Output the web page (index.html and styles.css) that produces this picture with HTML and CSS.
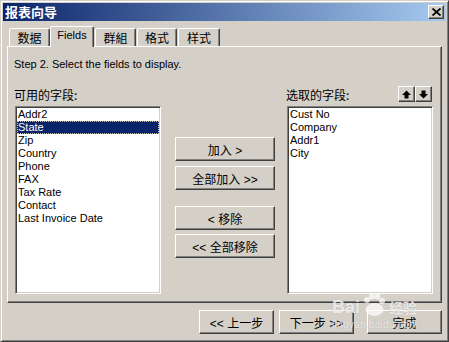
FILE: index.html
```html
<!DOCTYPE html>
<html lang="zh-CN">
<head>
  <meta charset="UTF-8" />
  <title>报表向导</title>
  <link rel="stylesheet" href="styles.css">
</head>
<body>
  <div class="window">
    <div class="titlebar">
      <span class="title">报表向导</span>
      <button class="close-btn" title="关闭">
        <svg width="9" height="8" viewBox="0 0 9 8"><path d="M0.5 0.5 L8.5 7.5 M8.5 0.5 L0.5 7.5" stroke="#000" stroke-width="1.7" fill="none"/></svg>
      </button>
    </div>

    <div class="tabs">
      <div class="tab tab-data">数据</div>
      <div class="tab tab-fields active">Fields</div>
      <div class="tab tab-group">群組</div>
      <div class="tab tab-format">格式</div>
      <div class="tab tab-style">样式</div>
    </div>

    <div class="panel">
      <div class="step">Step 2. Select the fields to display.</div>

      <div class="columns">
        <div class="field-col">
          <div class="col-head"><span class="col-label">可用的字段:</span></div>
          <ul class="listbox">
            <li>Addr2</li>
            <li class="selected">State</li>
            <li>Zip</li>
            <li>Country</li>
            <li>Phone</li>
            <li>FAX</li>
            <li>Tax Rate</li>
            <li>Contact</li>
            <li>Last Invoice Date</li>
          </ul>
        </div>

        <div class="move-col">
          <button class="btn move-btn">加入 &gt;</button>
          <button class="btn move-btn add-all">全部加入 &gt;&gt;</button>
          <button class="btn move-btn remove">&lt; 移除</button>
          <button class="btn move-btn remove-all">&lt;&lt; 全部移除</button>
        </div>

        <div class="field-col right-col">
          <div class="col-head">
            <span class="col-label">选取的字段:</span>
            <div class="order-btns">
              <button class="btn order-btn" title="上移">
                <svg width="9" height="9" viewBox="0 0 9 9"><polygon points="4.5,0.5 9,5 6.5,5 6.5,8.5 2.5,8.5 2.5,5 0,5" fill="#000"/></svg>
              </button>
              <button class="btn order-btn" title="下移">
                <svg width="9" height="9" viewBox="0 0 9 9"><polygon points="4.5,8.5 9,4 6.5,4 6.5,0.5 2.5,0.5 2.5,4 0,4" fill="#000"/></svg>
              </button>
            </div>
          </div>
          <ul class="listbox">
            <li>Cust No</li>
            <li>Company</li>
            <li>Addr1</li>
            <li>City</li>
          </ul>
        </div>
      </div>
    </div>

    <div class="footer">
      <button class="btn nav-btn">&lt;&lt; 上一步</button>
      <button class="btn nav-btn next">下一步 &gt;&gt;</button>
      <button class="btn nav-btn finish">完成</button>
    </div>

    <div class="watermark">
      <div class="wm-logo">
        <span class="wm-bai">Bai</span>
        <svg class="wm-paw" width="26" height="24" viewBox="0 0 26 24">
          <circle cx="6" cy="7" r="3" />
          <circle cx="11" cy="3.5" r="3" />
          <circle cx="16.5" cy="3.5" r="3" />
          <circle cx="21" cy="8" r="3" />
          <ellipse cx="13.5" cy="16.5" rx="9" ry="6.5" />
        </svg>
        <span class="wm-jy">经验</span>
      </div>
      <div class="wm-url">jingyan.baidu.com</div>
    </div>
  </div>
</body>
</html>
```

FILE: styles.css
```css
body {
  margin: 0;
  background: #d4d0c8;
  font-family: "Liberation Sans", "Noto Sans CJK SC", sans-serif;
  color: #000;
}

.window {
  position: relative;
  width: 449px;
  height: 342px;
  box-sizing: border-box;
  padding: 2px;
  border: 1px solid;
  border-color: #d4d0c8 #404040 #404040 #d4d0c8;
  box-shadow: inset 1px 1px #fff, inset -1px -1px #808080;
  background: #d4d0c8;
  overflow: hidden;
}

.titlebar {
  height: 18px;
  display: flex;
  align-items: center;
  justify-content: space-between;
  padding: 0 2px;
  background: linear-gradient(to right, #0a246a, #a6caf0);
}

.title {
  color: #fff;
  font-family: "Noto Sans CJK SC", sans-serif;
  font-weight: bold;
  font-size: 13px;
  line-height: 18px;
}

.btn {
  box-sizing: border-box;
  margin: 0;
  padding: 0;
  background: #d4d0c8;
  border: 1px solid;
  border-color: #fff #404040 #404040 #fff;
  box-shadow: inset -1px -1px #808080;
  font-family: "Liberation Sans", "Noto Sans CJK SC", sans-serif;
  font-size: 12px;
  color: #000;
}

.close-btn {
  width: 16px;
  height: 14px;
  padding: 0;
  display: flex;
  align-items: center;
  justify-content: center;
  background: #d4d0c8;
  border: 1px solid;
  border-color: #fff #404040 #404040 #fff;
  box-shadow: inset -1px -1px #808080;
}

/* tabs */
.tabs {
  position: relative;
  z-index: 1;
  display: flex;
  align-items: flex-end;
  height: 20px;
  margin: 5px 4px 0;
  padding-left: 2px;
}

.tab {
  height: 18px;
  box-sizing: border-box;
  border: 1px solid;
  border-bottom: none;
  border-color: #fff #404040 transparent #fff;
  border-radius: 2px 2px 0 0;
  box-shadow: inset -1px 0 #808080;
  background: #d4d0c8;
  font-family: "Noto Sans CJK SC", sans-serif;
  font-size: 12px;
  line-height: 17px;
  text-align: center;
}

.tab-data { width: 41px; }
.tab-group { width: 41px; margin-left: 1px; }
.tab-format { width: 40px; margin-left: 1px; }
.tab-style { width: 42px; margin-left: 1px; }

.tab.active {
  width: 44px;
  height: 21px;
  margin-bottom: -1px;
  font-family: "Liberation Sans", sans-serif;
  font-size: 11px;
}

/* tab page */
.panel {
  margin: 0 4px;
  height: 257px;
  box-sizing: border-box;
  padding: 11px 0 0 7px;
  border: 1px solid;
  border-color: #fff #404040 #404040 #fff;
  box-shadow: inset -1px -1px #808080;
}

.step {
  margin-left: -1px;
  font-size: 11px;
  line-height: 13px;
  height: 13px;
}

.columns {
  display: flex;
  margin-top: 15px;
}

.field-col {
  width: 146px;
}

.col-head {
  height: 17px;
  display: flex;
  align-items: center;
  justify-content: space-between;
}

.col-label {
  margin-left: -1px;
  font-family: "Noto Sans CJK SC", sans-serif;
  font-size: 12px;
  line-height: 17px;
}

.listbox {
  list-style: none;
  margin: 3px 0 0;
  padding: 1px 0 0;
  height: 188px;
  box-sizing: border-box;
  background: #fff;
  border: 1px solid;
  border-color: #808080 #fff #fff #808080;
  box-shadow: inset 1px 1px #404040, inset -1px -1px #d4d0c8;
}

.listbox li {
  margin: 0 1px;
  padding-left: 1px;
  height: 13px;
  font-size: 11px;
  line-height: 13px;
  white-space: nowrap;
}

.listbox li.selected {
  background: #0a246a;
  color: #fff;
  outline: 1px dotted #c8c4bc;
  outline-offset: -1px;
}

.move-col {
  width: 100px;
  margin-left: 14px;
  padding-top: 51px;
}

.move-btn {
  display: block;
  width: 100px;
  height: 24px;
}

.move-btn.add-all { margin-top: 5px; }
.move-btn.remove { margin-top: 16px; }
.move-btn.remove-all { margin-top: 4px; }

.right-col {
  margin-left: 12px;
}

.order-btns {
  display: flex;
  align-self: flex-start;
  margin-right: 1px;
}

.order-btn {
  width: 17px;
  height: 16px;
  display: flex;
  align-items: center;
  justify-content: center;
}

/* wizard buttons */
.footer {
  display: flex;
  justify-content: flex-end;
  margin-top: 7px;
  padding-right: 4px;
}

.nav-btn {
  width: 75px;
  height: 24px;
}

.nav-btn.next { margin-left: 5px; }
.nav-btn.finish { margin-left: 13px; }

/* image host watermark */
.watermark {
  position: absolute;
  left: 331px;
  top: 295px;
  color: rgba(255, 255, 255, 0.75);
  text-shadow: 0 0 1px rgba(110, 110, 110, 0.45);
  pointer-events: none;
}

.wm-logo {
  display: flex;
  align-items: center;
  height: 22px;
}

.wm-bai {
  font-family: "Liberation Sans", sans-serif;
  font-weight: bold;
  font-size: 18px;
}

.wm-paw {
  fill: rgba(255, 255, 255, 0.7);
  margin: -4px 2px 0 1px;
}

.wm-jy {
  font-family: "Noto Sans CJK SC", sans-serif;
  font-weight: bold;
  font-size: 14px;
}

.wm-url {
  margin-top: 1px;
  font-family: "Liberation Sans", sans-serif;
  font-size: 10px;
  letter-spacing: 0.3px;
}
```
